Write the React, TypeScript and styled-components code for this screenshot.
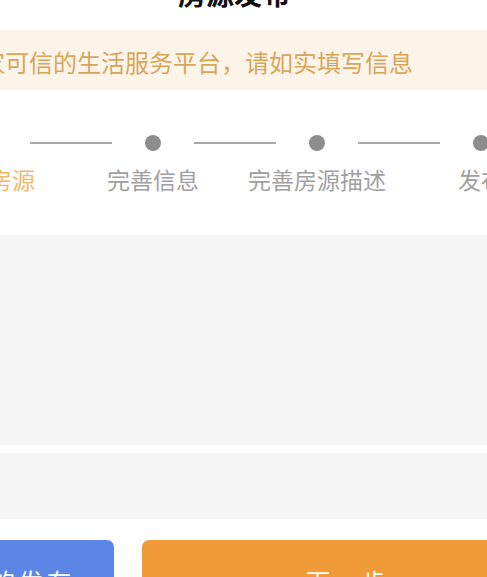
import styled, { createGlobalStyle } from "styled-components";

const GlobalStyle = createGlobalStyle`
  html, body {
    margin: 0;
    padding: 0;
    background: #fff;
    overflow: hidden;
  }
  body {
    font-family: "Noto Sans CJK SC", "Noto Sans", sans-serif;
  }
`;

const Page = styled.div`
  width: 487px;
  height: 577px;
  overflow: hidden;
  background: #fff;
  display: flex;
  flex-direction: column;
`;

const Header = styled.div`
  height: 7px;
  flex-shrink: 0;
  display: flex;
  align-items: flex-end;
  justify-content: center;
  padding-right: 19px;
  margin-bottom: 23px;
`;

const Title = styled.h1`
  margin: 0;
  font-size: 28px;
  line-height: 28px;
  font-weight: 700;
  color: #111;
  white-space: nowrap;
`;

const Notice = styled.div`
  height: 60px;
  flex-shrink: 0;
  background: #fdf4e9;
  display: flex;
  align-items: center;
  padding-top: 4px;
  box-sizing: border-box;
  overflow: hidden;
`;

const NoticeText = styled.span`
  margin-left: -43px;
  font-size: 24px;
  line-height: 30px;
  color: #d8a65a;
  white-space: nowrap;
`;

const Steps = styled.div`
  flex-shrink: 0;
  display: flex;
  margin-left: -93px;
  padding: 45px 0 41px;
`;

const Step = styled.div`
  width: 164px;
  flex-shrink: 0;
  display: flex;
  flex-direction: column;
  align-items: center;
  gap: 13px;
`;

const Track = styled.div`
  width: 100%;
  height: 16px;
  display: flex;
  align-items: center;
  justify-content: space-between;
`;

const Segment = styled.span<{ $hidden?: boolean }>`
  width: 41px;
  height: 2px;
  background: ${(p) => (p.$hidden ? "transparent" : "#a9a9a9")};
`;

const Dot = styled.span<{ $active?: boolean }>`
  width: 16px;
  height: 16px;
  border-radius: 50%;
  background: ${(p) => (p.$active ? "#efb565" : "#8d8d8d")};
`;

const StepLabel = styled.span<{ $active?: boolean }>`
  font-size: 23px;
  line-height: 30px;
  color: ${(p) => (p.$active ? "#eeb86c" : "#a0a0a0")};
  white-space: nowrap;
`;

const Panel = styled.div<{ $height: number }>`
  flex-shrink: 0;
  height: ${(p) => p.$height}px;
  background: #f5f5f5;
`;

const Gap = styled.div<{ $height: number }>`
  flex-shrink: 0;
  height: ${(p) => p.$height}px;
`;

const Actions = styled.div`
  flex-shrink: 0;
  display: flex;
  gap: 28px;
  margin-left: -80px;
`;

const ActionButton = styled.button<{ $tone: "blue" | "orange"; $width: number }>`
  width: ${(p) => p.$width}px;
  height: 80px;
  flex-shrink: 0;
  border: none;
  border-radius: 7px;
  background: ${(p) => (p.$tone === "blue" ? "#5b86e6" : "#f19b38")};
  color: #fff;
  font-family: inherit;
  font-size: 24px;
  letter-spacing: 4px;
  padding: 0 0 0 4px;
  display: flex;
  align-items: center;
  justify-content: center;
`;

const steps = ["选择房源", "完善信息", "完善房源描述", "发布"];

export default function App() {
  return (
    <>
      <GlobalStyle />
      <Page>
        <Header>
          <Title>房源发布</Title>
        </Header>
        <Notice>
          <NoticeText>一家可信的生活服务平台，请如实填写信息</NoticeText>
        </Notice>
        <Steps>
          {steps.map((label, i) => (
            <Step key={label}>
              <Track>
                <Segment $hidden={i === 0} />
                <Dot $active={i === 0} />
                <Segment $hidden={i === steps.length - 1} />
              </Track>
              <StepLabel $active={i === 0}>{label}</StepLabel>
            </Step>
          ))}
        </Steps>
        <Panel $height={210} />
        <Gap $height={8} />
        <Panel $height={66} />
        <Gap $height={21} />
        <Actions>
          <ActionButton $tone="blue" $width={194}>
            我的发布
          </ActionButton>
          <ActionButton $tone="orange" $width={408}>
            下一步
          </ActionButton>
        </Actions>
      </Page>
    </>
  );
}
